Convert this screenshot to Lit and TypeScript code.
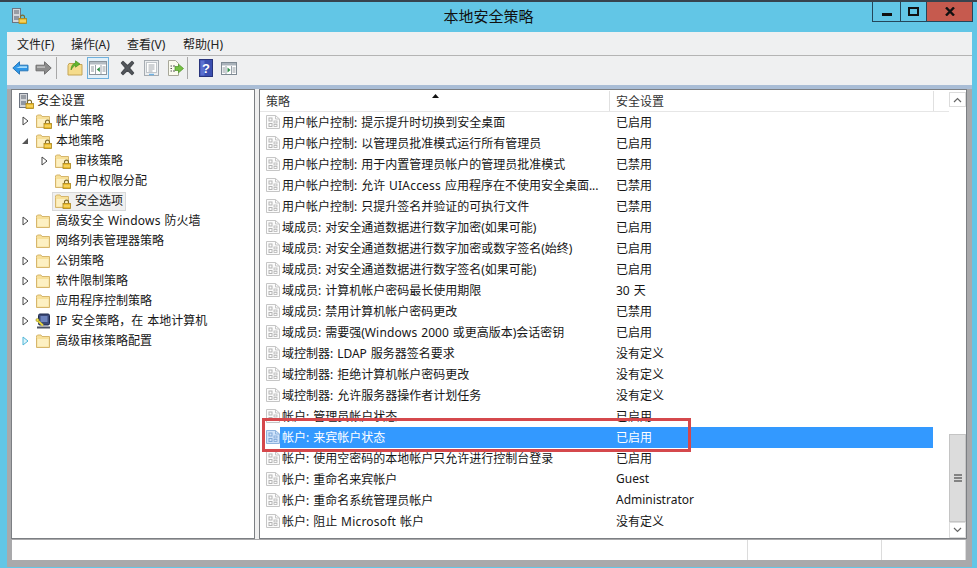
import { LitElement, html, css, svg } from "lit";
import { customElement } from "lit/decorators.js";

const lock = (x: number, y: number) => svg`
  <g transform="translate(${x} ${y})">
    <path d="M2 4V2.6a2 2 0 0 1 4 0V4" fill="none" stroke="#7d6a2c" stroke-width="1.1"/>
    <rect x=".5" y="4" width="7.5" height="5" fill="#ecbc2c" stroke="#a8841c" stroke-width=".8"/>
    <path d="M1 6.5h6.5" stroke="#fbe58e"/>
  </g>`;

const folderBody = svg`
  <path d="M1.5 4.5V14.5H14.5V3.5H7L6 2H2.5L1.5 3Z" fill="#f7e09a" stroke="#d6b66c"/>
  <path d="M2.5 6H13.5V13.5H2.5Z" fill="#fdf0c2"/>`;

const folder = (locked: boolean) => html`<svg class="ico" width="17" height="16" viewBox="0 0 17 16">
  ${folderBody}${locked ? lock(8.5, 6.5) : ""}
</svg>`;

const serverLock = html`<svg class="ico" width="17" height="16" viewBox="0 0 17 16">
  <rect x="1.5" y=".5" width="8" height="14" fill="#d4d6da" stroke="#6d7480"/>
  <path d="M3 3h5M3 5h5" stroke="#5c6570"/>
  <rect x="3" y="8" width="5" height="4" fill="#8f97a3"/>
  ${lock(7.5, 6.5)}
</svg>`;

const ipIcon = html`<svg class="ico" width="17" height="16" viewBox="0 0 17 16">
  <rect x="3.5" y="1" width="11" height="11" rx="1.5" fill="#3c4a78" stroke="#1e2a4c"/>
  <rect x="5.5" y="3" width="7" height="6" fill="#6d83bd"/>
  <path d="M2 14.5h13" stroke="#4b5160" stroke-width="2"/>
  <path d="M1.5 6.5 L8 12.5" stroke="#e8d63c" stroke-width="2"/>
  <circle cx="2.5" cy="7" r="1.6" fill="#f0e04a" stroke="#857a18" stroke-width=".5"/>
</svg>`;

const doc = (sel: boolean) => {
  const c = sel ? "#8fb4de" : "#c6c6c6";
  const d = sel ? "#7ea6d6" : "#b4b4b4";
  return html`<svg class="doc" width="14" height="14" viewBox="0 0 14 14">
    <path d="M.5 .5H9.5L13.5 4V13.5H.5Z" fill="${sel ? "#cfe3fa" : "#fcfcfc"}" stroke="${c}"/>
    <path d="M9.5 .5V4H13.5" fill="none" stroke="${c}"/>
    <rect x="3" y="3" width="3" height="3" fill="none" stroke="${d}"/>
    <rect x="3" y="8.5" width="3" height="3" fill="none" stroke="${d}"/>
    <rect x="8" y="6" width="3" height="2" fill="none" stroke="${d}" stroke-width=".8"/>
    <rect x="8" y="9.5" width="3" height="2" fill="none" stroke="${d}" stroke-width=".8"/>
  </svg>`;
};

const tools = {
  back: html`<svg width="17" height="14" viewBox="0 0 17 14"><path d="M.8 7 7.5 .8V4.2H16V9.8H7.5V13.2Z" fill="#2f97e8" stroke="#2a78b8" stroke-linejoin="round"/><path d="M8 5.2H15V7H4Z" fill="#a6dcfb"/></svg>`,
  forward: html`<svg width="17" height="14" viewBox="0 0 17 14"><path d="M16.2 7 9.5 .8V4.2H1V9.8H9.5V13.2Z" fill="#8c8c8c" stroke="#707070" stroke-linejoin="round"/><path d="M2 5.2H10V7H2Z" fill="#b8b8b8"/></svg>`,
  up: html`<svg width="16" height="16" viewBox="0 0 16 16"><path d="M1 5.5V15H15V4.5H8L7 3.5H2Z" fill="#f5dc8c" stroke="#c4a455"/><path d="M4 10C4 6 6 3.5 8.5 3V.8L13 4 8.5 7.2V5.3C7 5.7 5.5 7.5 4 10Z" fill="#62b52e" stroke="#3c8a18" stroke-width=".6"/></svg>`,
  tree: html`<svg width="18" height="14" viewBox="0 0 18 14"><rect x=".5" y=".5" width="17" height="13" fill="#fff" stroke="#8a949c"/><rect x="1" y="1" width="16" height="2.5" fill="#b4bcc3"/><path d="M6.5 4V13M12 4V13" stroke="#9aa3ab"/><path d="M2 6h3M2 8h3M2 10h3M13.5 6h3M13.5 8h3M13.5 10h3" stroke="#8f989f"/><path d="M10.8 6V11L7.8 8.5Z" fill="#2f8f46"/></svg>`,
  del: html`<svg width="17" height="16" viewBox="0 0 17 16"><path d="M2.5 3 4 1.5 8.5 5.8 13 1.5 14.5 3 10.3 8 14.5 13 13 14.5 8.5 10.2 4 14.5 2.5 13 6.7 8Z" fill="#55595e" stroke="#4a4d52" stroke-width="1.4" stroke-linejoin="round"/></svg>`,
  prop: html`<svg width="15" height="16" viewBox="0 0 15 16"><rect x=".5" y=".5" width="14" height="15" fill="#eceef0" stroke="#a6acb2"/><rect x="2.5" y="2.5" width="10" height="10" fill="#fff" stroke="#c0c5ca"/><path d="M4.5 5h6M4.5 7h6M4.5 9h6M4.5 11h4" stroke="#a0a6ac"/><path d="M5 14.5h5" stroke="#6fb2e4" stroke-width="1.4"/></svg>`,
  exp: html`<svg width="16" height="16" viewBox="0 0 16 16"><path d="M.5 .5H7.5L10.5 3.5V15.5H.5Z" fill="#fbfbef" stroke="#a8a89a"/><path d="M2.5 6h1.5M5 6h2M2.5 8.5h1.5M2.5 11h1.5M5 11h2" stroke="#555"/><path d="M7 6.5H10.5V4.2L15.5 8.5 10.5 12.8V10.5H7Z" fill="#74c043" stroke="#4c9424" stroke-width=".7"/></svg>`,
  help: html`<svg width="14" height="18" viewBox="0 0 14 18"><rect x=".5" y=".5" width="13" height="17" fill="#3b4fb0" stroke="#28347c"/><rect x="1.5" y="1.5" width="4" height="15" fill="#5b70cf"/><text x="7" y="14" text-anchor="middle" font-size="13" font-weight="700" font-family="Liberation Sans, sans-serif" fill="#fff">?</text></svg>`,
  panel: html`<svg width="16" height="13" viewBox="0 0 16 13"><rect x=".5" y=".5" width="15" height="12" fill="#fff" stroke="#7f8a93"/><rect x="1" y="1" width="14" height="2.5" fill="#a9b2ba"/><path d="M5 4V12M10.5 4V12" stroke="#9aa3ab"/><path d="M11.5 6h3M11.5 8h3M11.5 10h3M1.5 6h2.5M1.5 8h2.5M1.5 10h2.5" stroke="#8f989f"/><path d="M6.5 5.5V10.5L9.5 8Z" fill="#2f8f46"/></svg>`,
};

const tri = (kind: string) => {
  if (kind === "open") return html`<svg width="10" height="10" viewBox="0 0 10 10"><path d="M8 2V8H2Z" fill="#555"/></svg>`;
  if (kind === "closed") return html`<svg width="10" height="10" viewBox="0 0 10 10"><path d="M3 1 8 5 3 9Z" fill="#fff" stroke="#444"/></svg>`;
  if (kind === "hot") return html`<svg width="10" height="10" viewBox="0 0 10 10"><path d="M3 1 8 5 3 9Z" fill="#dff4fb" stroke="#4fb6d8"/></svg>`;
  return html`<svg width="10" height="10" viewBox="0 0 10 10"></svg>`;
};

/* Longer Latin words run slightly wider in the reference's UI font. */
const txt = (s: string) =>
  s.split(/(Windows|Microsoft|UIAccess)/).map((p, i) => (i % 2 ? html`<span class="lat">${p}</span>` : p));

type TreeNode = { t: string; lv: number; a: string; i: string; sel?: boolean };
const TREE: TreeNode[] = [
  { t: "安全设置", lv: -1, a: "", i: "root" },
  { t: "帐户策略", lv: 0, a: "closed", i: "lock" },
  { t: "本地策略", lv: 0, a: "open", i: "lock" },
  { t: "审核策略", lv: 1, a: "closed", i: "lock" },
  { t: "用户权限分配", lv: 1, a: "", i: "lock" },
  { t: "安全选项", lv: 1, a: "", i: "lock", sel: true },
  { t: "高级安全 Windows 防火墙", lv: 0, a: "closed", i: "folder" },
  { t: "网络列表管理器策略", lv: 0, a: "", i: "folder" },
  { t: "公钥策略", lv: 0, a: "closed", i: "folder" },
  { t: "软件限制策略", lv: 0, a: "closed", i: "folder" },
  { t: "应用程序控制策略", lv: 0, a: "closed", i: "folder" },
  { t: "IP 安全策略，在 本地计算机", lv: 0, a: "closed", i: "ip" },
  { t: "高级审核策略配置", lv: 0, a: "hot", i: "folder" },
];

const ROWS: [string, string][] = [
  ["用户帐户控制: 提示提升时切换到安全桌面", "已启用"],
  ["用户帐户控制: 以管理员批准模式运行所有管理员", "已启用"],
  ["用户帐户控制: 用于内置管理员帐户的管理员批准模式", "已禁用"],
  ["用户帐户控制: 允许 UIAccess 应用程序在不使用安全桌面...", "已禁用"],
  ["用户帐户控制: 只提升签名并验证的可执行文件", "已禁用"],
  ["域成员: 对安全通道数据进行数字加密(如果可能)", "已启用"],
  ["域成员: 对安全通道数据进行数字加密或数字签名(始终)", "已启用"],
  ["域成员: 对安全通道数据进行数字签名(如果可能)", "已启用"],
  ["域成员: 计算机帐户密码最长使用期限", "30 天"],
  ["域成员: 禁用计算机帐户密码更改", "已禁用"],
  ["域成员: 需要强(Windows 2000 或更高版本)会话密钥", "已启用"],
  ["域控制器: LDAP 服务器签名要求", "没有定义"],
  ["域控制器: 拒绝计算机帐户密码更改", "没有定义"],
  ["域控制器: 允许服务器操作者计划任务", "没有定义"],
  ["帐户: 管理员帐户状态", "已启用"],
  ["帐户: 来宾帐户状态", "已启用"],
  ["帐户: 使用空密码的本地帐户只允许进行控制台登录", "已启用"],
  ["帐户: 重命名来宾帐户", "Guest"],
  ["帐户: 重命名系统管理员帐户", "Administrator"],
  ["帐户: 阻止 Microsoft 帐户", "没有定义"],
];

@customElement("app-root")
export class AppRoot extends LitElement {
  static styles = css`
    :host {
      display: block;
      width: 977px;
      height: 568px;
      overflow: hidden;
      position: relative;
      background: #62c6e6;
      font-family: "Noto Sans", "Noto Sans CJK SC", sans-serif;
      font-size: 12px;
      word-spacing: .8px;
      color: #161616;
    }
    .top { height: 2px; background: #37434e; }
    .title {
      height: 30px;
      display: grid;
      grid-template-columns: 1fr auto 1fr;
      padding: 0 4px;
    }
    .title .appicon { align-self: start; display: flex; margin: 6px 0 0 7px; }
    .title h1 {
      margin: 0;
      font-weight: 400;
      font-size: 15px;
      line-height: 28px;
      color: #111;
    }
    .ctrls { justify-self: end; display: flex; height: 20px; }
    .ctrls div {
      border: 1px solid #24465a;
      border-top: none;
      margin-left: -1px;
      display: flex;
      align-items: center;
      justify-content: center;
      box-sizing: border-box;
    }
    .ctrls .min { width: 29px; }
    .ctrls .max { width: 27px; }
    .ctrls .close { width: 47px; background: #c65a4e; }
    .client {
      margin: 0 5px 0 7px;
      display: flex;
      flex-direction: column;
      background: #a9a9ab;
    }
    .menu {
      height: 23px;
      border-bottom: 1px solid #b4b4b4;
      display: flex;
      align-items: center;
      padding-left: 10px;
      color: #222;
      background: #eff0f1;
    }
    .menu span { width: 56px; }
    .menu span:first-child { width: 54px; }
    .toolbar {
      height: 29px;
      box-sizing: border-box;
      padding: 0 0 5px 5px;
      display: flex;
      align-items: center;
      background: #eff0f1;
    }
    .toolbar .t { display: flex; align-items: center; justify-content: center; flex: none; }
    .sep { width: 1px; height: 22px; background: #a8a8a8; flex: none; }
    .toolbar .active {
      width: 20px;
      height: 20px;
      border: 1px solid #6fb0dc;
      background: #e2f0f9;
    }
    .strip { height: 4px; background: #a9bdd6; }
    .main {
      height: 451px;
      display: flex;
      padding-bottom: 1px;
      box-sizing: border-box;
      background: #a9a9ab;
    }
    .pane {
      background: #fff;
      border: 1px solid #7c7f83;
      box-sizing: border-box;
    }
    .treepane {
      width: 244px;
      margin-left: 4px;
      padding-top: 1px;
    }
    .gutter { width: 4px; background: #efefef; }
    .tnode {
      height: 20px;
      display: flex;
      align-items: center;
    }
    .tnode .arr { width: 10px; height: 10px; display: flex; flex: none; margin-right: 3px; }
    .tnode .ico { flex: none; margin-right: 4px; }
    .tnode.root .ico { margin-right: 2px; }
    .tnode .lbl { line-height: 17px; white-space: nowrap; margin-top: -1px; }
    .box { display: flex; align-items: center; height: 19px; padding: 0 3px 0 2px; box-sizing: border-box; }
    .tnode.sel .box {
      background: #f0f0f0;
      outline: 1px solid #d9d9d9;
      outline-offset: -1px;
    }
    .lat { letter-spacing: .2px; }
    .listpane {
      flex: 1;
      display: flex;
      margin-right: 5px;
      min-width: 0;
    }
    .listcol { width: 689px; flex: none; }
    .head {
      height: 21px;
      margin-top: 1px;
      display: flex;
      border-bottom: 1px solid #e6e6e6;
      position: relative;
      color: #333;
      box-sizing: border-box;
    }
    .head .c1, .head .c2 { padding: 2px 0 0 6px; box-sizing: border-box; line-height: 18px; border-right: 1px solid #e0e0e0; }
    .head .c1 { width: 350px; }
    .head .c2 { width: 324px; }
    .sort { position: absolute; left: 172px; top: 3px; }
    .row {
      height: 21px;
      display: flex;
      align-items: center;
      padding-left: 6px;
    }
    .doc { flex: none; margin-top: -1px; }
    .cell {
      flex: 1;
      display: flex;
      height: 21px;
      align-items: center;
      margin-right: 16px;
      padding-left: 2px;
    }
    .row.sel .cell { background: #3399ff; color: #fff; }
    .cell .a { width: 334px; white-space: nowrap; overflow: hidden; flex: none; margin-top: -2px; }
    .cell .b { white-space: nowrap; margin-top: -2px; }
    .scroll {
      width: 17px;
      flex: none;
      display: flex;
      flex-direction: column;
      padding-top: 2px;
      box-sizing: border-box;
    }
    .sbtn {
      height: 15px;
      box-sizing: border-box;
      border: 1px solid #dcdcdc;
      display: flex;
      align-items: center;
      justify-content: center;
      flex: none;
      background: #fff;
    }
    .sbtn.dn { height: 16px; }
    .track { flex: 1; display: flex; flex-direction: column; justify-content: flex-end; }
    .thumb {
      height: 88px;
      background: #dcdcdc;
      border: 1px solid #c4c4c4;
      box-sizing: border-box;
      display: flex;
      align-items: center;
      justify-content: center;
    }
    .status {
      height: 20px;
      margin-left: 5px;
      margin-right: 6px;
      display: flex;
      background: #fff;
    }
    .status div { border-right: 1px solid #dcdcdc; box-sizing: border-box; }
    .s1 { width: 736px; }
    .s2 { width: 134px; }
    .s3 { width: 84px; }
    .bottom { height: 7px; background: #a9a9ab; }
    .redbox {
      position: absolute;
      left: 262px;
      top: 418px;
      width: 429px;
      height: 34px;
      border: 3px solid #d5484c;
      box-sizing: border-box;
      pointer-events: none;
    }
    .w3 { width: 3px; } .w4 { width: 4px; } .w6 { width: 6px; } .w8 { width: 8px; }
    .w9 { width: 9px; } .w10 { width: 10px; } .w11 { width: 11px; }
  `;

  private icon(i: string) {
    if (i === "root") return serverLock;
    if (i === "ip") return ipIcon;
    return folder(i === "lock");
  }

  render() {
    return html`
      <div class="top"></div>
      <div class="title">
        <div class="appicon">${serverLock}</div>
        <h1>本地安全策略</h1>
        <div class="ctrls">
          <div class="min"><svg width="10" height="10" viewBox="0 0 10 10"><path d="M0 7.5H10" stroke="#111" stroke-width="3"/></svg></div>
          <div class="max"><svg width="11" height="9" viewBox="0 0 11 9"><rect x="1" y="1" width="9" height="7" fill="none" stroke="#111" stroke-width="2"/></svg></div>
          <div class="close"><svg width="10" height="9" viewBox="0 0 10 9"><path d="M1 .5 9 8.5M9 .5 1 8.5" stroke="#111" stroke-width="2.4"/></svg></div>
        </div>
      </div>
      <div class="client">
        <div class="menu">
          <span>文件(F)</span><span>操作(A)</span><span>查看(V)</span><span>帮助(H)</span>
        </div>
        <div class="toolbar">
          <div class="t">${tools.back}</div>
          <div class="t w6"></div>
          <div class="t">${tools.forward}</div>
          <div class="t w4"></div>
          <div class="sep"></div>
          <div class="t w10"></div>
          <div class="t">${tools.up}</div>
          <div class="t w4"></div>
          <div class="t active">${tools.tree}</div>
          <div class="t w10"></div>
          <div class="t">${tools.del}</div>
          <div class="t w8"></div>
          <div class="t">${tools.prop}</div>
          <div class="t w9"></div>
          <div class="t">${tools.exp}</div>
          <div class="t w3"></div>
          <div class="sep"></div>
          <div class="t w11"></div>
          <div class="t">${tools.help}</div>
          <div class="t w8"></div>
          <div class="t">${tools.panel}</div>
        </div>
        <div class="strip"></div>
        <div class="main">
          <div class="pane treepane">
            ${TREE.map(
              (n) => html`<div class="tnode ${n.sel ? "sel" : ""} ${n.lv < 0 ? "root" : ""}" style="padding-left:${n.lv < 0 ? 4 : 8 + n.lv * 19}px">
                ${n.lv >= 0 ? html`<span class="arr">${tri(n.a)}</span>` : ""}
                <span class="box">${this.icon(n.i)}<span class="lbl">${txt(n.t)}</span></span>
              </div>`
            )}
          </div>
          <div class="gutter"></div>
          <div class="pane listpane">
            <div class="listcol">
              <div class="head">
                <div class="c1">策略</div>
                <div class="c2">安全设置</div>
                <svg class="sort" width="7" height="4" viewBox="0 0 7 4"><path d="M3.5 0 7 4H0Z" fill="#111"/></svg>
              </div>
              ${ROWS.map(
                (r, i) => html`<div class="row ${i === 15 ? "sel" : ""}">
                  ${doc(i === 15)}
                  <div class="cell"><span class="a">${txt(r[0])}</span><span class="b">${r[1]}</span></div>
                </div>`
              )}
            </div>
            <div class="scroll">
              <div class="sbtn"><svg width="9" height="6" viewBox="0 0 9 6"><path d="M1 5 4.5 1.5 8 5" fill="none" stroke="#666" stroke-width="1.2"/></svg></div>
              <div class="track">
                <div class="thumb"><svg width="8" height="8" viewBox="0 0 8 8"><path d="M0 1H8M0 4H8M0 7H8" stroke="#666" stroke-width="1.3"/></svg></div>
              </div>
              <div class="sbtn dn"><svg width="9" height="6" viewBox="0 0 9 6"><path d="M1 1 4.5 4.5 8 1" fill="none" stroke="#666" stroke-width="1.2"/></svg></div>
            </div>
          </div>
        </div>
        <div class="status">
          <div class="s1"></div>
          <div class="s2"></div>
          <div class="s3"></div>
        </div>
        <div class="bottom"></div>
      </div>
      <div class="redbox"></div>
    `;
  }
}
